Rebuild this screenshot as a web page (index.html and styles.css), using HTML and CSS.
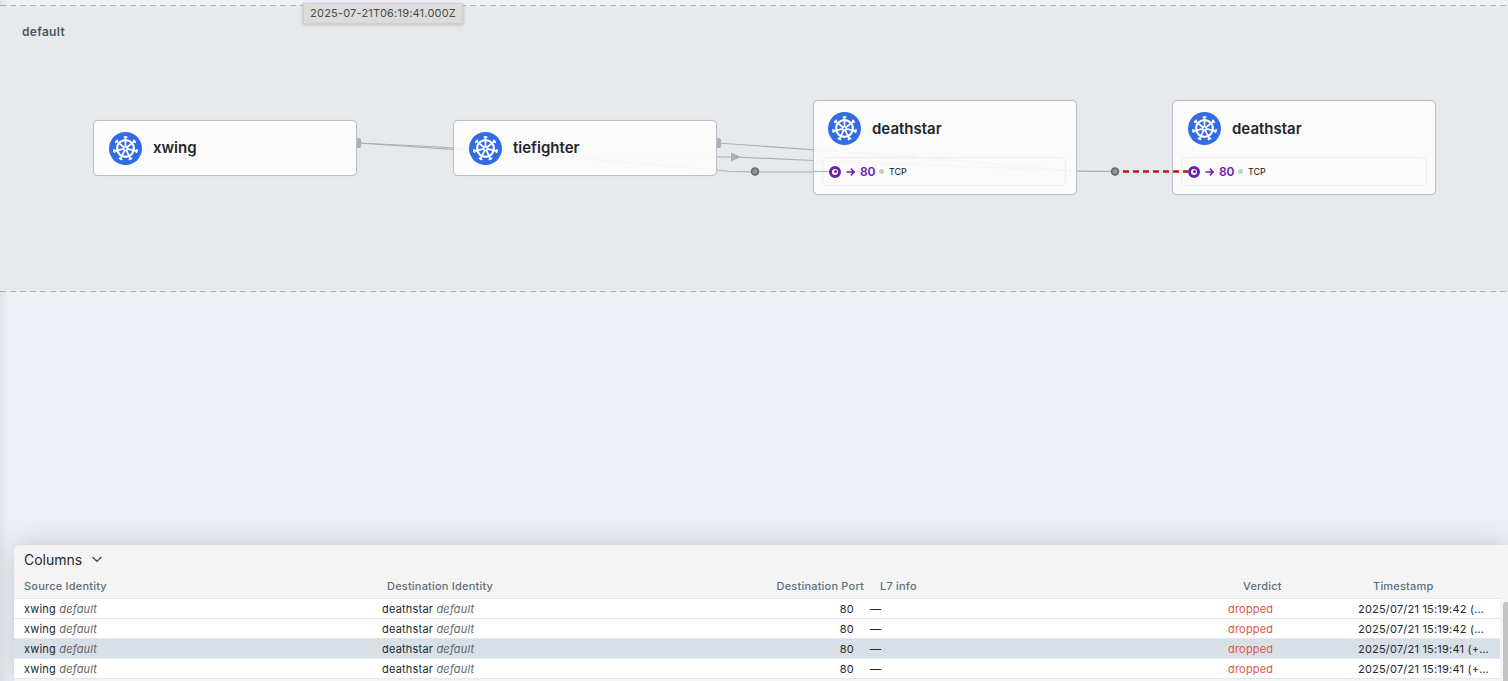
FILE: index.html
```html
<!DOCTYPE html>
<html lang="en">
<head>
    <meta charset="UTF-8">
    <meta name="viewport" content="width=device-width, initial-scale=1.0">
    <title>Service Map</title>
    <link rel="stylesheet" href="styles.css">
</head>
<body>
    <!-- shared kubernetes wheel -->
    <svg class="defs" width="0" height="0">
        <defs>
            <g id="spoke">
                <path d="M16.5 14.5V4.8" />
                <path d="M15.3 5h2.4" />
            </g>
            <symbol id="k8s" viewBox="0 0 33 33">
                <circle cx="16.5" cy="16.5" r="16.5" fill="#326ce5" />
                <g fill="none" stroke="#fff" stroke-width="1.7" stroke-linecap="round">
                    <circle cx="16.5" cy="16.5" r="8.4" stroke-width="2.2" />
                    <circle cx="16.5" cy="16.5" r="2" stroke-width="1.6" />
                    <use href="#spoke" />
                    <use href="#spoke" transform="rotate(51.43 16.5 16.5)" />
                    <use href="#spoke" transform="rotate(102.86 16.5 16.5)" />
                    <use href="#spoke" transform="rotate(154.29 16.5 16.5)" />
                    <use href="#spoke" transform="rotate(205.71 16.5 16.5)" />
                    <use href="#spoke" transform="rotate(257.14 16.5 16.5)" />
                    <use href="#spoke" transform="rotate(308.57 16.5 16.5)" />
                </g>
            </symbol>
        </defs>
    </svg>

    <div class="map">
        <div class="namespace">
            <span class="namespace-name">default</span>
        </div>

        <!-- links go under the cards, cards are slightly see-through -->
        <svg class="links" width="1508" height="545" viewBox="0 0 1508 545">
            <g fill="none" stroke="#a9afb7" stroke-width="1.2">
                <path d="M358 143 L440 147 L717 170 L730 171.5 L755 172 L835 172" />
                <path d="M358 143 L555 156.5 L735 157 L813 160.5 L1076 171 L1115 171.5" />
                <path d="M718 143 L915 157 L1076 171 L1115 171.5" />
            </g>
            <g fill="#a9afb7">
                <path d="M551 152.5 L560 157 L551 161.5Z" />
                <path d="M731 152.5 L741 157 L731 161.5Z" />
                <path d="M911 152.5 L920 157 L911 161.5Z" />
            </g>
        </svg>

        <div class="card card-xwing">
            <div class="card-head">
                <svg class="k8s-icon"><use href="#k8s" /></svg>
                <span class="card-title">xwing</span>
            </div>
            <span class="connector"></span>
        </div>

        <div class="card card-tiefighter">
            <div class="card-head">
                <svg class="k8s-icon"><use href="#k8s" /></svg>
                <span class="card-title">tiefighter</span>
            </div>
            <span class="connector"></span>
        </div>

        <div class="card card-deathstar-1">
            <div class="card-head">
                <svg class="k8s-icon"><use href="#k8s" /></svg>
                <span class="card-title">deathstar</span>
            </div>
            <div class="port-box">
                <span class="port-ring"></span>
                <svg class="port-arrow" width="9" height="10" viewBox="0 0 9 10"><path d="M0.5 5H8.2M4.8 1.6L8.2 5L4.8 8.4" /></svg>
                <span class="port-num">80</span>
                <span class="port-dot"></span>
                <span class="port-proto">TCP</span>
            </div>
        </div>

        <div class="card card-deathstar-2">
            <div class="card-head">
                <svg class="k8s-icon"><use href="#k8s" /></svg>
                <span class="card-title">deathstar</span>
            </div>
            <div class="port-box">
                <span class="port-ring"></span>
                <svg class="port-arrow" width="9" height="10" viewBox="0 0 9 10"><path d="M0.5 5H8.2M4.8 1.6L8.2 5L4.8 8.4" /></svg>
                <span class="port-num">80</span>
                <span class="port-dot"></span>
                <span class="port-proto">TCP</span>
            </div>
        </div>

        <svg class="links links-top" width="1508" height="545" viewBox="0 0 1508 545">
            <path class="ingress" d="M813 171.5 L829 171.5" />
            <path class="denied" d="M1123 171.5 L1188 171.5" />
            <circle class="hop" cx="755" cy="171.5" r="3.5" />
            <circle class="hop" cx="1115" cy="171.5" r="3.5" />
        </svg>

        <div class="tooltip">2025-07-21T06:19:41.000Z</div>
    </div>

    <div class="flows">
        <div class="flows-bar">
            <span>Columns</span>
            <svg width="12" height="12" viewBox="0 0 12 12"><path d="M1.5 4L6 8.2L10.5 4" /></svg>
        </div>

        <div class="flow-row flow-head">
            <div class="th">Source Identity</div>
            <div class="th th-dest">Destination Identity</div>
            <div class="th th-port">Destination Port</div>
            <div class="th th-l7">L7 info</div>
            <div class="th th-verdict">Verdict</div>
            <div class="th th-time">Timestamp</div>
        </div>

        <div class="flow-row">
            <div class="td">xwing <em>default</em></div>
            <div class="td">deathstar <em>default</em></div>
            <div class="td td-port">80</div>
            <div class="td td-l7">—</div>
            <div class="td td-verdict">dropped</div>
            <div class="td td-time">2025/07/21 15:19:42 (+9 hours ago)</div>
        </div>
        <div class="flow-row">
            <div class="td">xwing <em>default</em></div>
            <div class="td">deathstar <em>default</em></div>
            <div class="td td-port">80</div>
            <div class="td td-l7">—</div>
            <div class="td td-verdict">dropped</div>
            <div class="td td-time">2025/07/21 15:19:42 (+9 hours ago)</div>
        </div>
        <div class="flow-row selected">
            <div class="td">xwing <em>default</em></div>
            <div class="td">deathstar <em>default</em></div>
            <div class="td td-port">80</div>
            <div class="td td-l7">—</div>
            <div class="td td-verdict">dropped</div>
            <div class="td td-time">2025/07/21 15:19:41 (+9 hours ago)</div>
        </div>
        <div class="flow-row">
            <div class="td">xwing <em>default</em></div>
            <div class="td">deathstar <em>default</em></div>
            <div class="td td-port">80</div>
            <div class="td td-l7">—</div>
            <div class="td td-verdict">dropped</div>
            <div class="td td-time">2025/07/21 15:19:41 (+9 hours ago)</div>
        </div>

        <div class="scrollbar"></div>
    </div>
</body>
</html>
```

FILE: styles.css
```css
* {
    margin: 0;
    padding: 0;
    box-sizing: border-box;
}

html, body {
    height: 100%;
}

body {
    font-family: Inter, "Liberation Sans", sans-serif;
    background: #eef2f7;
    box-shadow: inset 10px 0 10px -8px rgba(60, 70, 85, 0.12);
    overflow: hidden;
    display: flex;
    flex-direction: column;
}

.defs {
    position: absolute;
}

/* service map canvas */
.map {
    position: relative;
    height: 545px;
    flex: none;
    padding-top: 5px;
}

.namespace {
    position: relative;
    height: 287px;
    background: #e6eaed;
    padding: 19px 22px;
}

.namespace::before,
.namespace::after {
    content: "";
    position: absolute;
    left: 0;
    right: 0;
    height: 1px;
    background: repeating-linear-gradient(90deg, #aab1b8 0, #aab1b8 6px, transparent 6px, transparent 10px);
}

.namespace::before {
    top: 0;
}

.namespace::after {
    bottom: 0;
}

.namespace-name {
    font-size: 12px;
    font-weight: 600;
    letter-spacing: 0.3px;
    color: #4b5563;
    line-height: 15px;
    display: block;
}

.links {
    position: absolute;
    left: 0;
    top: 0;
}

.ingress {
    fill: none;
    stroke: #b4b9c0;
    stroke-width: 1.2;
}

.denied {
    fill: none;
    stroke: #c70f0f;
    stroke-width: 2.5;
    stroke-dasharray: 6 4;
}

.hop {
    fill: #8a939e;
    stroke: #5d6671;
    stroke-width: 1.5;
}

.card {
    position: absolute;
    width: 264px;
    background: rgba(253, 252, 252, 0.92);
    border: 1px solid #babec6;
    box-shadow: 0 0 1px #babec6;
    border-radius: 5px;
    padding: 11px 15px 0;
}

.card-xwing {
    left: 93px;
    top: 120px;
    height: 56px;
}

.card-tiefighter {
    left: 453px;
    top: 120px;
    height: 56px;
}

.card-deathstar-1 {
    left: 813px;
    top: 100px;
    height: 95px;
    padding-left: 14px;
}

.card-deathstar-2 {
    left: 1172px;
    top: 100px;
    height: 95px;
}

.card-head {
    display: flex;
    align-items: center;
    gap: 11px;
}

.k8s-icon {
    width: 33px;
    height: 33px;
    flex: none;
}

.card-title {
    font-size: 15px;
    font-weight: 600;
    color: #24262a;
}

.card-xwing .card-title,
.card-tiefighter .card-title {
    margin-bottom: 2px;
}

.connector {
    position: absolute;
    right: -5px;
    top: 17px;
    width: 4px;
    height: 10px;
    background: #aeb0b3;
    border-radius: 0 2px 2px 0;
}

.port-box {
    margin: 12px -5px 0 -6px;
    height: 29px;
    border: 1px solid #eceef1;
    border-radius: 5px;
    display: flex;
    align-items: center;
    padding-left: 6px;
}

.card-deathstar-2 .port-box {
    margin-left: -7px;
    margin-right: -7px;
}

.port-ring {
    width: 12px;
    height: 12px;
    border-radius: 50%;
    border: 3px solid #6b21a8;
    background: #fff;
    position: relative;
    flex: none;
}

.port-ring::after {
    content: "";
    position: absolute;
    left: 1.5px;
    top: 1.5px;
    width: 3px;
    height: 3px;
    border-radius: 50%;
    background: #6b21a8;
}

.port-arrow {
    margin-left: 5px;
    fill: none;
    stroke: #6b21a8;
    stroke-width: 1.5;
    flex: none;
}

.port-num {
    margin-left: 5px;
    font-size: 12px;
    font-weight: 600;
    letter-spacing: -0.3px;
    color: #6b21a8;
}

.port-dot {
    width: 5px;
    height: 5px;
    margin-left: 4px;
    border-radius: 50%;
    background: #c8ccd1;
    flex: none;
}

.port-proto {
    margin-left: 5px;
    font-size: 9px;
    color: #111;
}

.tooltip {
    position: absolute;
    left: 303px;
    top: 3px;
    width: 160px;
    height: 21px;
    background: #dcdcdc;
    border: 1px solid #cfcfcf;
    box-shadow: 0 1px 4px rgba(0, 0, 0, 0.2);
    font-size: 11px;
    letter-spacing: 0.2px;
    line-height: 19px;
    color: #4a4a4a;
    text-align: center;
    white-space: nowrap;
}

/* flows table */
.flows {
    position: relative;
    flex: 1;
    margin-left: 14px;
    background: #f4f4f4;
    border-top-left-radius: 6px;
    box-shadow: 0 0 30px rgba(60, 70, 85, 0.26);
    overflow: hidden;
}

.flows-bar {
    height: 30px;
    padding-left: 10px;
    padding-bottom: 2px;
    display: flex;
    align-items: center;
    gap: 9px;
    font-size: 14px;
    color: #24292f;
}

.flows-bar svg {
    fill: none;
    stroke: #4a5159;
    stroke-width: 1.4;
}

.flow-row {
    display: grid;
    grid-template-columns: 358px 398px 94px 354px 130px 152px;
    width: 1486px;
    height: 20px;
    background: #fff;
    border-bottom: 1px solid #e4e8ed;
    align-items: start;
}

.flow-head {
    height: 24px;
    padding-bottom: 2px;
    background: transparent;
    border-bottom: 1px solid #e4e8ed;
    align-items: center;
}

.selected {
    background: #d8dfe6;
}

.th {
    padding-left: 10px;
    font-size: 11px;
    font-weight: 500;
    letter-spacing: 0.2px;
    color: #5c7080;
    white-space: nowrap;
}

.th-dest {
    padding-left: 15px;
}

.th-port {
    padding-left: 0;
    text-align: right;
    direction: rtl;
}

.th-l7 {
    padding-left: 16px;
}

.th-verdict,
.th-time {
    padding-left: 25px;
}

.td {
    height: 19px;
    padding: 0 10px;
    font-size: 11px;
    letter-spacing: 0.2px;
    color: #24292f;
    white-space: nowrap;
    overflow: hidden;
    text-overflow: ellipsis;
    line-height: 21px;
}

.td em {
    color: #666;
}

.td-port {
    text-align: right;
}

.td-l7 {
    padding-left: 6px;
}

.td-verdict {
    color: #e5534b;
}

.scrollbar {
    position: absolute;
    right: 0;
    top: 57px;
    width: 5px;
    bottom: 0;
    background: #c4c4c4;
    border-radius: 3px 0 0 0;
}
```
